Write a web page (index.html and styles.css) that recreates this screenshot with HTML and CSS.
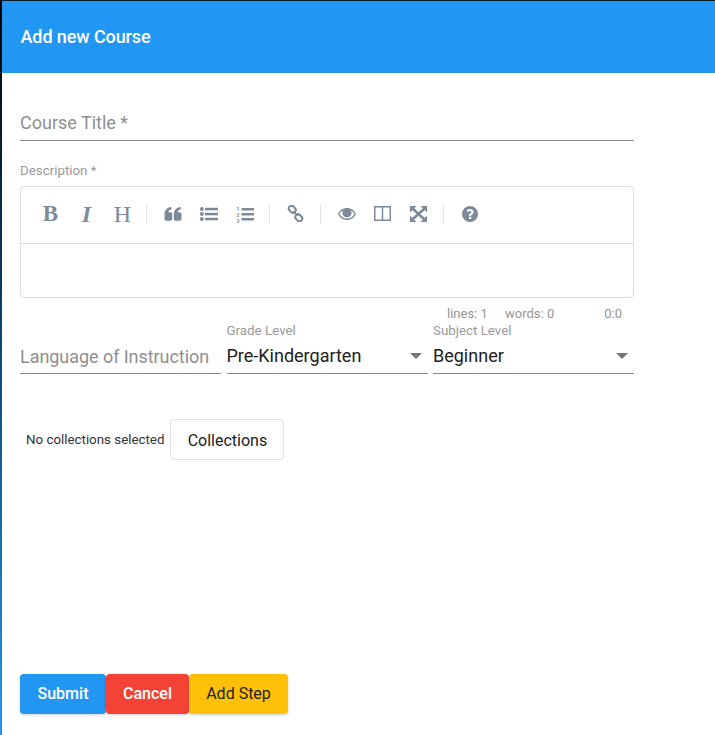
FILE: index.html
```html
<!DOCTYPE html>
<html lang="en">
<head>
    <meta charset="UTF-8">
    <meta name="viewport" content="width=device-width, initial-scale=1.0">
    <title>Add new Course</title>
    <link rel="stylesheet" href="styles.css">
</head>
<body>
    <div class="page">
        <header class="header">Add new Course</header>

        <form class="form">
            <div class="field field-title">Course Title *</div>

            <label class="small-label description-label">Description *</label>
            <div class="editor">
                <div class="toolbar">
                    <span class="tool tool-text tool-bold">B</span>
                    <span class="tool tool-text tool-italic">I</span>
                    <span class="tool tool-text">H</span>
                    <i class="separator"></i>
                    <span class="tool">
                        <svg width="18" height="16" viewBox="0 0 18 16"><path d="M0.500 8.500C0.500 4.500 2.500 1.500 7.500 1V3.500C5.500 3.800 4.500 4.800 4.300 6.300H6.500C7.500 6.300 8.200 7 8.200 8V13C8.200 14 7.500 14.700 6.500 14.700H2.200C1.200 14.700 0.500 14 0.500 13ZM9.800 8.500C9.800 4.500 11.800 1.500 16.800 1V3.500C14.800 3.800 13.800 4.800 13.600 6.300H15.800C16.800 6.300 17.500 7 17.500 8V13C17.500 14 16.800 14.700 15.800 14.700H11.500C10.500 14.700 9.800 14 9.800 13Z"/></svg>
                    </span>
                    <span class="tool">
                        <svg width="18" height="14" viewBox="0 0 18 14"><circle cx="1.900" cy="2" r="1.900"/><circle cx="1.900" cy="7" r="1.900"/><circle cx="1.900" cy="12" r="1.900"/><rect x="5" y="0.800" width="13" height="2.500"/><rect x="5" y="5.800" width="13" height="2.500"/><rect x="5" y="10.800" width="13" height="2.500"/></svg>
                    </span>
                    <span class="tool">
                        <svg width="18" height="18" viewBox="0 0 18 18"><text x="0.500" y="5.500" class="ol-digit">1</text><text x="0.500" y="11.500" class="ol-digit">2</text><text x="0.500" y="17.500" class="ol-digit">3</text><rect x="5.500" y="3" width="12.500" height="2.500"/><rect x="5.500" y="8" width="12.500" height="2.500"/><rect x="5.500" y="13" width="12.500" height="2.500"/></svg>
                    </span>
                    <i class="separator sep-link"></i>
                    <span class="tool">
                        <svg width="17" height="17" viewBox="0 0 17 17" class="stroke-icon"><rect x="1.500" y="1.500" width="7.500" height="5.500" rx="2.700" transform="rotate(45 5.250 4.250)"/><rect x="8" y="10" width="7.500" height="5.500" rx="2.700" transform="rotate(45 11.750 12.750)"/><path d="M6.500 6 10.500 11"/></svg>
                    </span>
                    <i class="separator sep-link"></i>
                    <span class="tool">
                        <svg width="18" height="12" viewBox="0 0 18 12"><path fill-rule="evenodd" d="M9 0C13 0 16.300 2.300 18 6 16.300 9.700 13 12 9 12S1.700 9.700 0 6C1.700 2.300 5 0 9 0ZM12.700 2.200C13.300 3 13.600 3.900 13.600 4.800 13.600 7.300 11.500 9.400 9 9.400S4.400 7.300 4.400 4.800C4.400 3.900 4.700 3 5.300 2.200 3.700 3 2.500 4.300 1.500 6 3.200 9 6 10.600 9 10.600S14.800 9 16.500 6C15.500 4.200 14.200 3 12.700 2.200Z"/></svg>
                    </span>
                    <span class="tool">
                        <svg width="17" height="15" viewBox="0 0 17 15" class="stroke-icon thin"><rect x="0.750" y="0.750" width="15.500" height="13.500"/><path d="M8.500 1V14"/></svg>
                    </span>
                    <span class="tool">
                        <svg width="17" height="16" viewBox="0 0 17 16"><path d="M0 0H6.500L0 6.500ZM17 0V6.500L10.500 0ZM0 16V9.500L6.500 16ZM17 16H10.500L17 9.500Z"/><path class="expand-cross" d="M3 3 14 13M14 3 3 13"/></svg>
                    </span>
                    <i class="separator sep-link"></i>
                    <span class="tool">
                        <svg width="16" height="16" viewBox="0 0 16 16"><path fill-rule="evenodd" d="M8 0A8 8 0 1 1 8 16 8 8 0 0 1 8 0ZM7 10.700V13H9.300V10.700ZM8.100 3C6.400 3 5.200 3.800 4.600 5L6.200 6.200C6.600 5.500 7.100 5.100 7.900 5.100 8.600 5.100 9.200 5.500 9.200 6.100 9.200 6.700 8.800 7 8.100 7.400 7.400 7.800 7 8.300 7 9.200V9.800H9.300V9.400C9.300 9 9.600 8.800 10.100 8.500 10.900 8 11.600 7.300 11.600 6 11.600 4.200 9.900 3 8.100 3Z"/></svg>
                    </span>
                </div>
                <div class="editor-body"></div>
            </div>

            <div class="status">
                <span class="status-lines">lines: 1</span>
                <span class="status-words">words: 0</span>
                <span class="status-cursor">0:0</span>
            </div>

            <div class="select-row">
                <div class="select-col">
                    <div class="select-box placeholder">Language of Instruction</div>
                </div>
                <div class="select-col">
                    <label class="small-label">Grade Level</label>
                    <div class="select-box">Pre-Kindergarten<span class="arrow"></span></div>
                </div>
                <div class="select-col">
                    <label class="small-label">Subject Level</label>
                    <div class="select-box">Beginner<span class="arrow"></span></div>
                </div>
            </div>

            <div class="collections">
                <span class="collections-note">No collections selected</span>
                <button type="button" class="btn btn-outline">Collections</button>
            </div>

            <div class="actions">
                <button type="button" class="btn btn-submit">Submit</button>
                <button type="button" class="btn btn-cancel">Cancel</button>
                <button type="button" class="btn btn-step">Add Step</button>
            </div>
        </form>
    </div>
</body>
</html>
```

FILE: styles.css
```css
* {
    box-sizing: border-box;
}

html, body {
    height: 100%;
}

body {
    margin: 0;
    padding-left: 2px;
    font-family: Roboto, sans-serif;
    color: #212121;
    background: linear-gradient(to bottom, #000000, #2196f3);
    overflow: hidden;
}

.page {
    height: 100%;
    display: flex;
    flex-direction: column;
    background: #ffffff;
}

.header {
    height: 73px;
    padding: 27px 0 0 18.500px;
    border-top: 1px solid #0b1a26;
    background: #2196f3;
    color: #ffffff;
    font-size: 18px;
    font-weight: 500;
    letter-spacing: -0.1px;
    line-height: 18px;
}

.form {
    flex: 1;
    display: flex;
    flex-direction: column;
    width: 632px;
    padding: 32px 0 21px 18px;
}

.field-title {
    height: 36px;
    border-bottom: 1px solid #8c8c8c;
    color: #8f8f8f;
    font-size: 18px;
    line-height: 35px;
}

.small-label {
    display: block;
    color: #9a9a9a;
    font-size: 13.330px;
    line-height: 16px;
}

.description-label {
    margin-top: 22px;
    margin-bottom: 7px;
}

.editor {
    height: 112px;
    border: 1px solid #dddddd;
    border-radius: 4px;
}

.toolbar {
    height: 57px;
    display: flex;
    align-items: center;
    padding: 0 0 3px 11.500px;
    border-bottom: 1px solid #dddddd;
}

.tool {
    width: 30px;
    height: 30px;
    margin: 0 3px;
    display: flex;
    align-items: center;
    justify-content: center;
    color: #7c8a99;
    fill: #7c8a99;
}

.tool-text {
    font-family: "Liberation Serif", serif;
    font-size: 24px;
    line-height: 30px;
}

.tool-bold {
    font-size: 23px;
    font-weight: 700;
}

.tool-italic {
    font-style: italic;
    font-weight: 700;
}

.ol-digit {
    font-family: Roboto, sans-serif;
    font-size: 5.100px;
    font-weight: 700;
}

.stroke-icon {
    fill: none;
    stroke: #7c8a99;
    stroke-width: 2;
}

.stroke-icon.thin {
    stroke-width: 1.500;
}

.expand-cross {
    fill: none;
    stroke: #7c8a99;
    stroke-width: 2.500;
}

.separator {
    width: 1px;
    height: 20px;
    margin: 0 8px 0 5px;
    background: #e2e5e8;
}

.sep-link {
    margin: 0 8px 0 6px;
}

.status {
    display: flex;
    justify-content: flex-end;
    height: 25px;
    padding: 8px 12px 0 0;
    color: #959694;
    font-size: 13px;
    line-height: 16px;
}

.status-lines,
.status-words {
    width: 58px;
}

.status-cursor {
    width: 59px;
    text-align: right;
}

.select-row {
    display: grid;
    grid-template-columns: 201px 201px 201px;
    column-gap: 5.500px;
    align-items: end;
}

.select-box {
    position: relative;
    height: 35px;
    border-bottom: 1px solid #8c8c8c;
    font-size: 18px;
    line-height: 34px;
}

.placeholder {
    color: #8f8f8f;
    line-height: 36px;
    letter-spacing: -0.05px;
}

.arrow {
    position: absolute;
    right: 6px;
    top: 14px;
    border-left: 6px solid transparent;
    border-right: 6px solid transparent;
    border-top: 6px solid #757575;
}

.collections {
    display: flex;
    align-items: center;
    gap: 6px;
    margin-top: 45px;
    padding-left: 6px;
}

.collections-note {
    font-size: 13.330px;
    color: #333333;
}

.btn {
    height: 40px;
    padding: 0;
    border: none;
    border-radius: 4px;
    font-family: Roboto, sans-serif;
    font-size: 16px;
    font-weight: 500;
    box-shadow: 0 1px 3px rgba(0, 0, 0, 0.2);
}

.btn-outline {
    width: 114px;
    height: 41px;
    padding-top: 1px;
    background: #ffffff;
    border: 1px solid #e0e0e0;
    box-shadow: none;
    color: #212121;
    font-weight: 400;
}

.actions {
    display: flex;
    margin-top: auto;
}

.btn-submit {
    width: 86px;
    padding-bottom: 2px;
    background: #2196f3;
    color: #ffffff;
}

.btn-cancel {
    width: 83px;
    padding-bottom: 2px;
    background: #f44336;
    color: #ffffff;
}

.btn-step {
    width: 99px;
    padding-bottom: 2px;
    background: #ffc107;
    color: #212121;
    font-weight: 400;
}
```
